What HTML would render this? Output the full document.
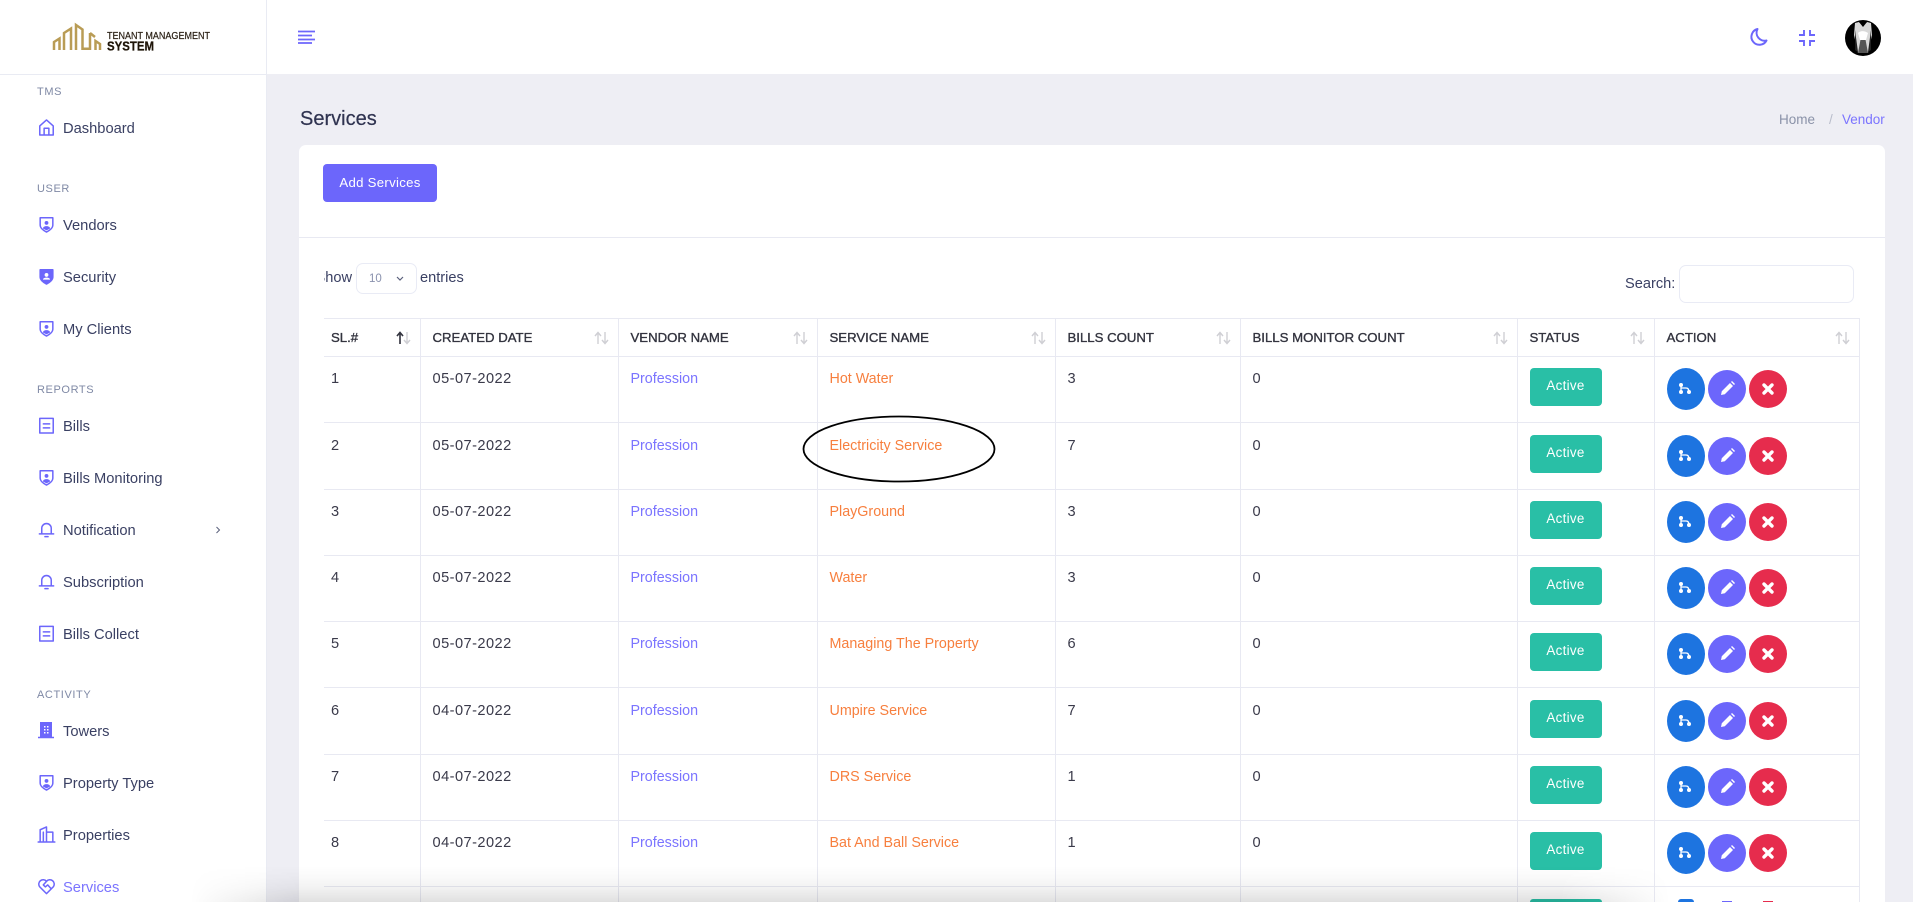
<!DOCTYPE html>
<html><head><meta charset="utf-8"><title>Services</title>
<style>
*{box-sizing:border-box}
html,body{margin:0;padding:0;width:1913px;height:902px;overflow:hidden;background:#eeeef4;font-family:"Liberation Sans",sans-serif;color:#3a3a4a}
#wrap{position:relative;width:1913px;height:902px;overflow:hidden;background:#eeeef4}
.a{position:absolute}
#side{left:0;top:0;width:267px;height:902px;background:#fff;border-right:1px solid #e9ebf3}
#logo{left:0;top:0;width:267px;height:75px;border-bottom:1px solid #e9ebf3}
#head{left:267px;top:0;width:1646px;height:74px;background:#fff}
.sec{position:absolute;left:37px;font-size:11px;line-height:14px;letter-spacing:.6px;color:#7f89a5}
.it{position:absolute;left:63px;font-size:14.7px;line-height:20px;color:#3a4063;white-space:nowrap;margin-top:1px}
.ic{position:absolute;left:37px;width:19px;height:19px;fill:none;stroke:#6c66fb;stroke-width:1.9;stroke-linejoin:round;stroke-linecap:round}
.f{fill:#6c66fb;stroke:none}
#card{left:299px;top:145px;width:1586px;height:757px;background:#fff;border-radius:7px 7px 0 0}
#btnadd{left:323px;top:164px;width:114px;height:38px;background:#6c66fb;border-radius:4px;color:#fff;font-size:13.2px;line-height:38px;text-align:center;letter-spacing:.3px}
table{position:absolute;left:324px;top:318px;width:1535px;border-collapse:collapse;table-layout:fixed}
td,th{border:1px solid #e8e9f2;padding:12.4px 0 0 12px;vertical-align:top;font-size:14.6px;line-height:20px;text-align:left;font-weight:normal;height:66.25px;white-space:nowrap;overflow:hidden;position:relative}
tr td:first-child,tr th:first-child{border-left:0;padding-left:7px}
td:nth-child(2){letter-spacing:.45px}
th{height:38px;padding-top:8px;color:#33343f;font-size:13.2px;-webkit-text-stroke:.35px #33343f;line-height:21px}
.v,.o{font-size:14.3px}
.v{color:#7b74ff}.o{color:#f77f3e}
.st{display:block;width:72px;height:38px;margin-top:-1px;background:#29bfa6;border-radius:4px;color:#fff;text-align:center;font-size:13.4px;line-height:36px;letter-spacing:.3px}
.acts{display:flex;align-items:flex-start;margin-top:-1px}
.acts svg{display:block;flex:none}
.c1{width:38px;height:42px;margin-left:0}
.c2{width:38px;height:38px;margin:2px 0 0 3px}
.c3{width:38px;height:38px;margin:2px 0 0 3px}
.sort{position:absolute;right:9px;top:12px;width:15px;height:14px;fill:none;stroke:#cfcfd4;stroke-width:1.4}
.stub{position:absolute;top:886px;width:1px;height:16px;background:#e8e9f2}
#shade{left:190px;top:866px;width:1480px;height:36px;background:linear-gradient(180deg,rgba(0,0,0,0) 0,rgba(0,0,0,.02) 30%,rgba(0,0,0,.05) 60%,rgba(0,0,0,.12) 100%);-webkit-mask-image:linear-gradient(90deg,transparent,#000 110px,#000 1370px,transparent)}
</style></head><body><div id="wrap">
<svg width="0" height="0" style="position:absolute"><defs>
<symbol id="branch" viewBox="0 0 38 42"><rect width="38" height="42" rx="19" ry="21" fill="#1d74e0"/><g fill="#fff" stroke="none"><circle cx="14" cy="17" r="2"/><circle cx="14" cy="24" r="2"/><circle cx="22" cy="24" r="2"/></g><path d="M14 17v7M14 20h5c2 0 3 1.500 3 4" fill="none" stroke="#fff" stroke-width="1.300"/></symbol>
<symbol id="pen" viewBox="0 0 38 38"><circle cx="19" cy="19" r="19" fill="#6c66fb"/><path d="M13 25l.8-3.800 8.200-8.200 3 3-8.200 8.200z" fill="#fff"/><path d="M23 12l1-1 3 3-1 1z" fill="#fff"/></symbol>
<symbol id="x" viewBox="0 0 38 38"><circle cx="19" cy="19" r="19" fill="#e62c4d"/><path d="M15 15l8 8M23 15l-8 8" fill="none" stroke="#fff" stroke-width="3.400" stroke-linecap="round"/></symbol>
<symbol id="sh" viewBox="0 0 24 24"><path d="M4 3.500h16v9.500c0 4-4 6.500-8 8.500-4-2-8-4.500-8-8.500z"/><circle class="f" cx="12" cy="10" r="2.400"/><path class="f" d="M7.500 17c0-4 9-4 9 0l-4.500 2.400z"/></symbol>
<symbol id="art" viewBox="0 0 24 24"><rect x="3.500" y="3" width="17" height="18.500"/><path d="M8 10h8M8 15h8"/></symbol>
<symbol id="bell" viewBox="0 0 24 24"><path d="M6 17.500v-7a6 6 0 0 1 12 0v7M3 17.500h18M10 21h4"/></symbol>
<symbol id="ar" viewBox="0 0 15 14"><path d="M4 13V2M1 5l3-3.500L7 5M11 1v11.500M8 9l3 3.500 3-3.500"/></symbol>
</defs></svg>

<div id="head" class="a"></div>
<div id="card" class="a"></div>
<div class="a" style="left:299px;top:237px;width:1586px;height:1px;background:#e8e9f2"></div>
<div class="a" style="left:300px;top:107px;font-size:20px;line-height:24px;color:#2f3350;-webkit-text-stroke:.2px #2f3350">Services</div>
<div class="a" style="left:1779px;top:111px;font-size:13.500px;line-height:17px;color:#8a92a8">Home</div>
<div class="a" style="left:1829px;top:111px;font-size:13.500px;line-height:17px;color:#b9bdcb">/</div>
<div class="a" style="left:1842px;top:111px;font-size:13.500px;line-height:17px;color:#7b74ff">Vendor</div>

<svg class="a" style="left:298px;top:30px" width="18" height="14" fill="none" stroke="#6c66fb" stroke-width="1.800"><path d="M0 1.500h17M0 5.500h14M0 9.500h17M0 13h14"/></svg>
<svg class="a" style="left:1749px;top:26px" width="20" height="21" viewBox="0 0 20 21" fill="none" stroke="#6c66fb" stroke-width="2"><path d="M8.500 3a8 8 0 1 0 9 11.500A8 8 0 0 1 8.500 3z" stroke-linejoin="round"/></svg>
<svg class="a" style="left:1798px;top:29px" width="18" height="18" fill="none" stroke="#6c66fb" stroke-width="1.900"><path d="M6 1v5H1M12 1v5h5M6 17v-5H1M12 17v-5h5"/></svg>
<svg class="a" style="left:1845px;top:20px" width="36" height="36" viewBox="0 0 36 36"><circle cx="18" cy="18" r="18" fill="#000"/><path d="M10 3l4-1 4 5 4-5 4 1 1 12-4 18h-10l-4-18z" fill="#d8d8d8"/><path d="M14 2l4 4 4-4z" fill="#000"/><path d="M16 17h4l3 16H13z" fill="#555"/><path d="M13 13c3-3 7-2 10 0l-2 7h-6z" fill="#fff"/><path d="M10 10l3 22-3-2zM26 10l-3 22 3-2z" fill="#222"/></svg>

<div id="side" class="a"></div>
<div id="logo" class="a">
<svg class="a" style="left:50px;top:20px" width="170" height="34" viewBox="50 20 170 34"><g fill="none" stroke="#b99c55" stroke-width="2.500"><path d="M54 50v-8l5.500-3.500V50"/><path d="M64 50V33l7-4.500V50"/><path d="M76 50V25l6.500 4.500v19.200h7.500V33"/><path d="M90 33l5 4M95.500 50V41l4.500 3v6"/></g><text x="107" y="39" font-family="Liberation Sans" font-size="10" fill="#2a2015" stroke="#2a2015" stroke-width=".2" textLength="103" lengthAdjust="spacingAndGlyphs">TENANT MANAGEMENT</text><text x="107" y="50.500" font-family="Liberation Sans" font-size="12.500" font-weight="bold" fill="#1e1408" stroke="#1e1408" stroke-width=".25" textLength="47" lengthAdjust="spacingAndGlyphs">SYSTEM</text></svg>
</div>

<div class="sec" style="top:85px">TMS</div>
<svg class="ic" style="top:118px" viewBox="0 0 24 24"><path d="M3.500 10L12 2.500 20.500 10v11.500h-17zM9 21.500V13h6v8.500"/></svg>
<div class="it" style="top:118px">Dashboard</div>

<div class="sec" style="top:182px">USER</div>
<svg class="ic" style="top:215px"><use href="#sh"/></svg><div class="it" style="top:215px">Vendors</div>
<svg class="ic" style="top:267px" viewBox="0 0 24 24"><path fill="#6c66fb" d="M4 3.500h16v9.500c0 4-4 6.500-8 8.500-4-2-8-4.500-8-8.500z"/><circle cx="12" cy="10" r="2.400" fill="#fff" stroke="none"/><path fill="#fff" stroke="none" d="M7.500 16c0-3.500 9-3.500 9 0z"/></svg><div class="it" style="top:267px">Security</div>
<svg class="ic" style="top:319px"><use href="#sh"/></svg><div class="it" style="top:319px">My Clients</div>

<div class="sec" style="top:383px">REPORTS</div>
<svg class="ic" style="top:416px"><use href="#art"/></svg><div class="it" style="top:416px">Bills</div>
<svg class="ic" style="top:468px"><use href="#sh"/></svg><div class="it" style="top:468px">Bills Monitoring</div>
<svg class="ic" style="top:520px"><use href="#bell"/></svg><div class="it" style="top:520px">Notification</div>
<svg class="a" style="left:215px;top:526px" width="6" height="8" fill="none" stroke="#5a607c" stroke-width="1"><path d="M1.500 1l3 3-3 3"/></svg>
<svg class="ic" style="top:572px"><use href="#bell"/></svg><div class="it" style="top:572px">Subscription</div>
<svg class="ic" style="top:624px"><use href="#art"/></svg><div class="it" style="top:624px">Bills Collect</div>

<div class="sec" style="top:688px">ACTIVITY</div>
<svg class="a" style="left:37px;top:721px" width="18" height="18" viewBox="0 0 18 18"><path d="M3 1h12v15H3z" fill="#6c66fb"/><path d="M1 16.500h16" stroke="#6c66fb" stroke-width="1.500"/><path d="M7 5h1.500v1.500H7zM10 5h1.500v1.500H10zM7 8h1.500v1.500H7zM10 8h1.500v1.500H10zM7 11h1.500v1.500H7zM10 11h1.500v1.500H10z" fill="#fff"/></svg><div class="it" style="top:721px">Towers</div>
<svg class="ic" style="top:773px"><use href="#sh"/></svg><div class="it" style="top:773px">Property Type</div>
<svg class="ic" style="top:825px" viewBox="0 0 24 24"><path d="M1.500 21.500h21M4 21.500V6l8-3.500v19M12 9h8v12.500M8 21.500V9"/></svg><div class="it" style="top:825px">Properties</div>
<svg class="ic" style="top:877px" viewBox="0 0 24 24"><path d="M12 21L3.500 12.500a5.500 5.500 0 0 1 8.500-7 5.500 5.500 0 0 1 8.500 7zM12 5.500L8 10l2.500 2.500 3-2.500 4.500 5"/></svg><div class="it" style="top:877px;color:#7b74ff">Services</div>

<div id="btnadd" class="a">Add Services</div>
<div class="a" style="left:324px;top:268px;width:28px;height:20px;overflow:hidden;font-size:14.600px;line-height:20px;color:#3a4063;white-space:nowrap;direction:rtl">Show</div>
<div class="a" style="left:356px;top:263px;width:61px;height:31px;border:1px solid #e9ebf5;border-radius:7px;background:#fff"></div>
<div class="a" style="left:369px;top:271px;font-size:11.500px;line-height:16px;color:#8a92ae">10</div>
<svg class="a" style="left:396px;top:276px" width="8" height="6" fill="none" stroke="#5a607c" stroke-width="1.200"><path d="M1 1l3 3 3-3"/></svg>
<div class="a" style="left:420px;top:268px;font-size:14.600px;line-height:20px;color:#3a4063">entries</div>
<div class="a" style="left:1625px;top:274px;font-size:14.600px;line-height:20px;color:#3a4063">Search:</div>
<div class="a" style="left:1679px;top:265px;width:175px;height:38px;border:1px solid #e9ebf5;border-radius:7px;background:#fff"></div>

<table>
<colgroup><col style="width:96px"><col style="width:198px"><col style="width:199px"><col style="width:238px"><col style="width:185px"><col style="width:277px"><col style="width:137px"><col style="width:205px"></colgroup>
<tr><th>SL.#<svg class="sort"><use href="#ar"/></svg><svg class="sort" viewBox="0 0 15 14" style="stroke:none"><path d="M4 13V2M1 5l3-3.500L7 5" fill="none" stroke="#33343f" stroke-width="1.600"/></svg></th><th>CREATED DATE<svg class="sort"><use href="#ar"/></svg></th><th>VENDOR NAME<svg class="sort"><use href="#ar"/></svg></th><th>SERVICE NAME<svg class="sort"><use href="#ar"/></svg></th><th>BILLS COUNT<svg class="sort"><use href="#ar"/></svg></th><th>BILLS MONITOR COUNT<svg class="sort"><use href="#ar"/></svg></th><th>STATUS<svg class="sort"><use href="#ar"/></svg></th><th>ACTION<svg class="sort"><use href="#ar"/></svg></th></tr>
<tr><td>1</td><td>05-07-2022</td><td class="v">Profession</td><td class="o">Hot Water</td><td>3</td><td>0</td><td><span class="st">Active</span></td><td><div class="acts"><svg class="c1"><use href="#branch"/></svg><svg class="c2"><use href="#pen"/></svg><svg class="c3"><use href="#x"/></svg></div></td></tr>
<tr><td>2</td><td>05-07-2022</td><td class="v">Profession</td><td class="o">Electricity Service</td><td>7</td><td>0</td><td><span class="st">Active</span></td><td><div class="acts"><svg class="c1"><use href="#branch"/></svg><svg class="c2"><use href="#pen"/></svg><svg class="c3"><use href="#x"/></svg></div></td></tr>
<tr><td>3</td><td>05-07-2022</td><td class="v">Profession</td><td class="o">PlayGround</td><td>3</td><td>0</td><td><span class="st">Active</span></td><td><div class="acts"><svg class="c1"><use href="#branch"/></svg><svg class="c2"><use href="#pen"/></svg><svg class="c3"><use href="#x"/></svg></div></td></tr>
<tr><td>4</td><td>05-07-2022</td><td class="v">Profession</td><td class="o">Water</td><td>3</td><td>0</td><td><span class="st">Active</span></td><td><div class="acts"><svg class="c1"><use href="#branch"/></svg><svg class="c2"><use href="#pen"/></svg><svg class="c3"><use href="#x"/></svg></div></td></tr>
<tr><td>5</td><td>05-07-2022</td><td class="v">Profession</td><td class="o">Managing The Property</td><td>6</td><td>0</td><td><span class="st">Active</span></td><td><div class="acts"><svg class="c1"><use href="#branch"/></svg><svg class="c2"><use href="#pen"/></svg><svg class="c3"><use href="#x"/></svg></div></td></tr>
<tr><td>6</td><td>04-07-2022</td><td class="v">Profession</td><td class="o">Umpire Service</td><td>7</td><td>0</td><td><span class="st">Active</span></td><td><div class="acts"><svg class="c1"><use href="#branch"/></svg><svg class="c2"><use href="#pen"/></svg><svg class="c3"><use href="#x"/></svg></div></td></tr>
<tr><td>7</td><td>04-07-2022</td><td class="v">Profession</td><td class="o">DRS Service</td><td>1</td><td>0</td><td><span class="st">Active</span></td><td><div class="acts"><svg class="c1"><use href="#branch"/></svg><svg class="c2"><use href="#pen"/></svg><svg class="c3"><use href="#x"/></svg></div></td></tr>
<tr><td>8</td><td>04-07-2022</td><td class="v">Profession</td><td class="o">Bat And Ball Service</td><td>1</td><td>0</td><td><span class="st">Active</span></td><td><div class="acts"><svg class="c1"><use href="#branch"/></svg><svg class="c2"><use href="#pen"/></svg><svg class="c3"><use href="#x"/></svg></div></td></tr>
</table>
<div class="stub" style="left:420px"></div><div class="stub" style="left:618px"></div><div class="stub" style="left:817px"></div><div class="stub" style="left:1055px"></div><div class="stub" style="left:1240px"></div><div class="stub" style="left:1517px"></div><div class="stub" style="left:1654px"></div><div class="stub" style="left:1859px"></div>
<div class="a" style="left:1530px;top:899px;width:72px;height:3px;background:#29bfa6;border-radius:3px 3px 0 0"></div>
<div class="a" style="left:1678px;top:899px;width:16px;height:3px;background:#1d74e0;border-radius:8px 8px 0 0"></div>
<div class="a" style="left:1722px;top:901px;width:10px;height:1px;background:#6c66fb"></div>
<div class="a" style="left:1763px;top:901px;width:10px;height:1px;background:#e62c4d"></div>

<svg class="a" style="left:800px;top:413px" width="200" height="72" fill="none"><ellipse cx="99" cy="36" rx="95.500" ry="32.500" stroke="#000" stroke-width="1.800"/></svg>
<div id="shade" class="a"></div>
</div></body></html>
